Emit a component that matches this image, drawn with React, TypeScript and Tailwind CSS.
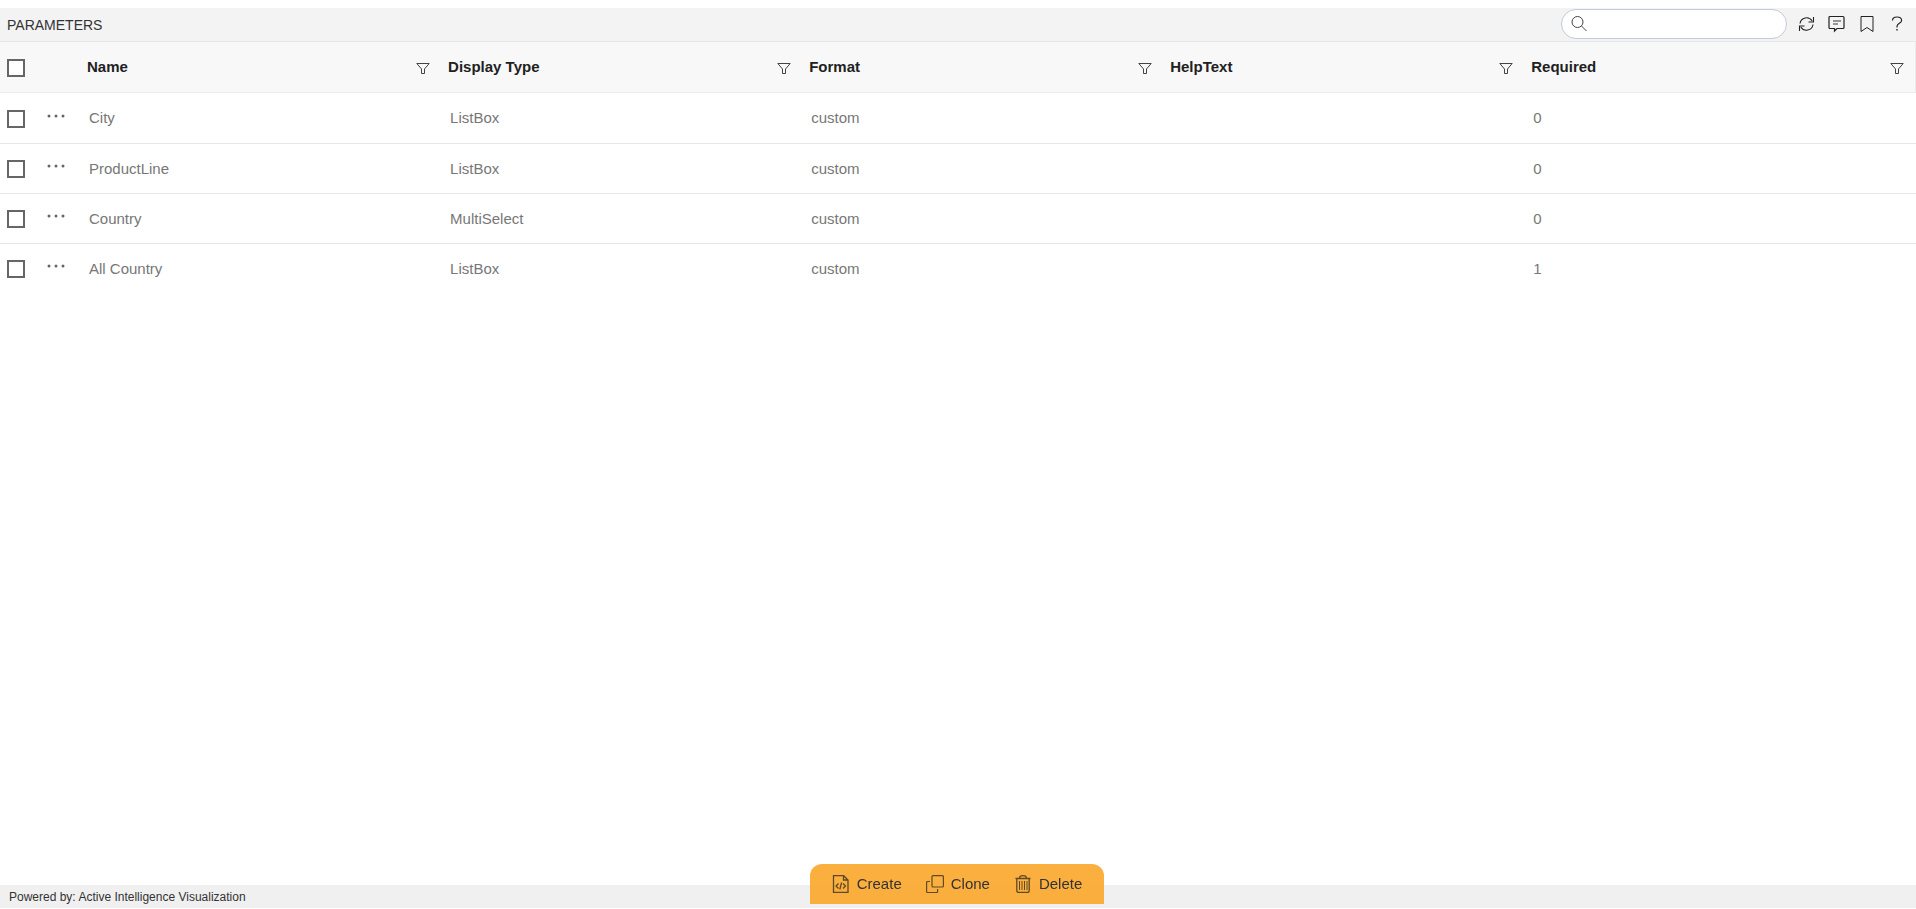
import type { ReactNode } from "react";

type Parameter = {
  name: string;
  displayType: string;
  format: string;
  helpText: string;
  required: number;
};

const COLUMNS = ["Name", "Display Type", "Format", "HelpText", "Required"];

const PARAMETERS: Parameter[] = [
  { name: "City", displayType: "ListBox", format: "custom", helpText: "", required: 0 },
  { name: "ProductLine", displayType: "ListBox", format: "custom", helpText: "", required: 0 },
  { name: "Country", displayType: "MultiSelect", format: "custom", helpText: "", required: 0 },
  { name: "All Country", displayType: "ListBox", format: "custom", helpText: "", required: 1 },
];

/** Thin line icon, drawn on a grid of its own pixel size. */
function LineIcon({ size = 18, children }: { size?: number; children: ReactNode }) {
  return (
    <svg
      width={size}
      height={size}
      viewBox={`0 0 ${size} ${size}`}
      fill="none"
      stroke="currentColor"
      strokeWidth="1"
      aria-hidden="true"
      className="block shrink-0"
    >
      {children}
    </svg>
  );
}

function SearchIcon() {
  return (
    <LineIcon>
      <circle cx="7.5" cy="7" r="5.5" />
      <path d="M11.5 11l5 5" />
    </LineIcon>
  );
}

function RefreshIcon() {
  return (
    <LineIcon>
      <path d="M2 8.5A6.6 6.6 0 0 1 14.2 6M15 9.5A6.6 6.6 0 0 1 2.800 12" strokeWidth="1.1" />
      <path d="M15.5 2v5h-5M1.5 16v-5h5" strokeWidth="1.1" />
    </LineIcon>
  );
}

function CommentIcon() {
  return (
    <LineIcon>
      <path
        d="M2 1.5h13a1 1 0 0 1 1 1v10a1 1 0 0 1-1 1H9L6.500 16v-2.500H2a1 1 0 0 1-1-1v-10a1 1 0 0 1 1-1z"
        strokeWidth="1.2"
      />
      <path d="M5 6h8M5 9h5" stroke="#777" strokeWidth="1.4" />
    </LineIcon>
  );
}

function BookmarkIcon() {
  return (
    <LineIcon>
      <path d="M3 1.5h12v15l-6-4-6 4z" />
    </LineIcon>
  );
}

function HelpIcon() {
  return (
    <LineIcon>
      <path
        d="M4.500 5.500C4.500 3 6.300 2 9 2s4.600 1.200 4.600 3.400C13.600 8.400 9 8.300 9 11.500v1"
        strokeWidth="1.2"
      />
      <path d="M9 14v1.500" strokeWidth="1.4" />
    </LineIcon>
  );
}

function FilterIcon() {
  return (
    <LineIcon size={14}>
      <path d="M.8 1.500h12.400L8.500 7v4.500h-3V7z" />
    </LineIcon>
  );
}

function CreateIcon() {
  return (
    <LineIcon>
      <path d="M1.500.5h10l4.500 4.500v12.500H1.500zM11.500.5V5H16" strokeWidth="1.3" />
      <path
        d="M6.500 8.500L4 11l2.500 2.500M11 8.500l2.500 2.500L11 13.500M9.600 7.500l-1.800 7"
        strokeWidth="1.3"
      />
    </LineIcon>
  );
}

function CloneIcon() {
  return (
    <LineIcon>
      <rect x="6" y=".6" width="11.4" height="11.4" rx="1" strokeWidth="1.2" />
      <path
        d="M4 6.500H1.600a1 1 0 0 0-1 1v9a1 1 0 0 0 1 1h9a1 1 0 0 0 1-1V14"
        strokeWidth="1.2"
      />
    </LineIcon>
  );
}

function DeleteIcon() {
  return (
    <LineIcon>
      <path
        d="M1.500 3.500h15M5.500 3.500c0-2 1-2.800 3.500-2.800s3.500.8 3.500 2.800M2.800 3.500v12a2 2 0 0 0 2 2h8.400a2 2 0 0 0 2-2v-12"
        strokeWidth="1.3"
      />
      <path d="M5.500 6v9M8 6v9M10.500 6v9M13 6v9" />
    </LineIcon>
  );
}

function ToolButton({ label, children }: { label: string; children: ReactNode }) {
  return (
    <button type="button" aria-label={label} className="flex h-8 w-[30px] items-center justify-center text-[#222]">
      {children}
    </button>
  );
}

function Tick({ label }: { label: string }) {
  return (
    <input
      type="checkbox"
      aria-label={label}
      className="block size-[18px] appearance-none border-2 border-[#666] bg-white checked:bg-[#666]"
    />
  );
}

function ActionButton({ label, icon }: { label: string; icon: ReactNode }) {
  return (
    <button type="button" className="flex items-center gap-[7px] text-[15px] text-[#333]">
      <span className="text-[#5e4a24]">{icon}</span>
      {label}
    </button>
  );
}

export default function App() {
  return (
    <div className="flex min-h-screen flex-col bg-white pt-2 pb-px font-['Liberation_Sans',Arial,sans-serif] text-[15px]">
      <header className="flex h-[34px] items-center justify-between border-b border-[#e6e6e6] bg-[#f3f3f3] pr-1 pl-[7px]">
        <h1 className="text-sm text-[#333]">PARAMETERS</h1>
        <div className="flex items-center pb-0.5">
          <label className="mr-[5px] flex h-[30px] w-[226px] items-center rounded-full border border-[#c3c9da] bg-white px-2 text-[#444]">
            <SearchIcon />
            <input type="text" aria-label="Search" className="ml-2 min-w-0 flex-1 outline-none" />
          </label>
          <ToolButton label="Refresh"><RefreshIcon /></ToolButton>
          <ToolButton label="Comments"><CommentIcon /></ToolButton>
          <ToolButton label="Bookmark"><BookmarkIcon /></ToolButton>
          <ToolButton label="Help"><HelpIcon /></ToolButton>
        </div>
      </header>

      <main className="flex-1">
        <table className="w-full table-fixed border-collapse">
          <colgroup>
            <col className="w-10" />
            <col className="w-[35px]" />
            <col className="w-[18.85%]" />
            <col className="w-[18.85%]" />
            <col className="w-[18.85%]" />
            <col className="w-[18.85%]" />
            <col />
          </colgroup>
          <thead>
            <tr className="h-[50px] border-r border-b border-[#ececec] bg-[#f8f8f8] text-left text-[#212121]">
              <th className="pt-0.5 pl-[7px]">
                <Tick label="Select all" />
              </th>
              <td />
              {COLUMNS.map((column) => (
                <th key={column} className="pr-1.5 pl-3 font-bold last:pr-[11px]">
                  <div className="flex items-center justify-between">
                    {column}
                    <button type="button" aria-label={`Filter ${column}`} className="pt-1 text-[#444]">
                      <FilterIcon />
                    </button>
                  </div>
                </th>
              ))}
            </tr>
          </thead>
          <tbody className="text-[#777]">
            {PARAMETERS.map((row) => (
              <tr
                key={row.name}
                className="h-[50px] border-b border-[#e6e6e6] first:h-[51px] last:border-b-0 *:pt-0.5"
              >
                <td className="pl-[7px]">
                  <Tick label={`Select ${row.name}`} />
                </td>
                <td className="pl-1.5">
                  <button type="button" aria-label={`Options for ${row.name}`} className="block pb-1.5">
                    <svg width="20" height="4" viewBox="0 0 20 4" fill="#666" className="block">
                      <circle cx="3" cy="2" r="1.5" />
                      <circle cx="10" cy="2" r="1.5" />
                      <circle cx="17" cy="2" r="1.5" />
                    </svg>
                  </button>
                </td>
                <td className="pl-3.5">{row.name}</td>
                <td className="pl-3.5">{row.displayType}</td>
                <td className="pl-3.5">{row.format}</td>
                <td className="pl-3.5">{row.helpText}</td>
                <td className="pl-3.5">{row.required}</td>
              </tr>
            ))}
          </tbody>
        </table>
      </main>

      <footer className="flex h-[23px] items-center bg-[#f0f0f0] pl-[9px] text-xs text-[#333]">
        Powered by: Active Intelligence Visualization
      </footer>

      {/* Action bar floats over the footer */}
      <div className="fixed inset-x-0 bottom-[5px] flex justify-center pr-0.5">
        <div className="flex h-10 items-center gap-6 rounded-t-xl bg-[#faa92f]/93 px-[22px]">
          <ActionButton label="Create" icon={<CreateIcon />} />
          <ActionButton label="Clone" icon={<CloneIcon />} />
          <ActionButton label="Delete" icon={<DeleteIcon />} />
        </div>
      </div>
    </div>
  );
}
